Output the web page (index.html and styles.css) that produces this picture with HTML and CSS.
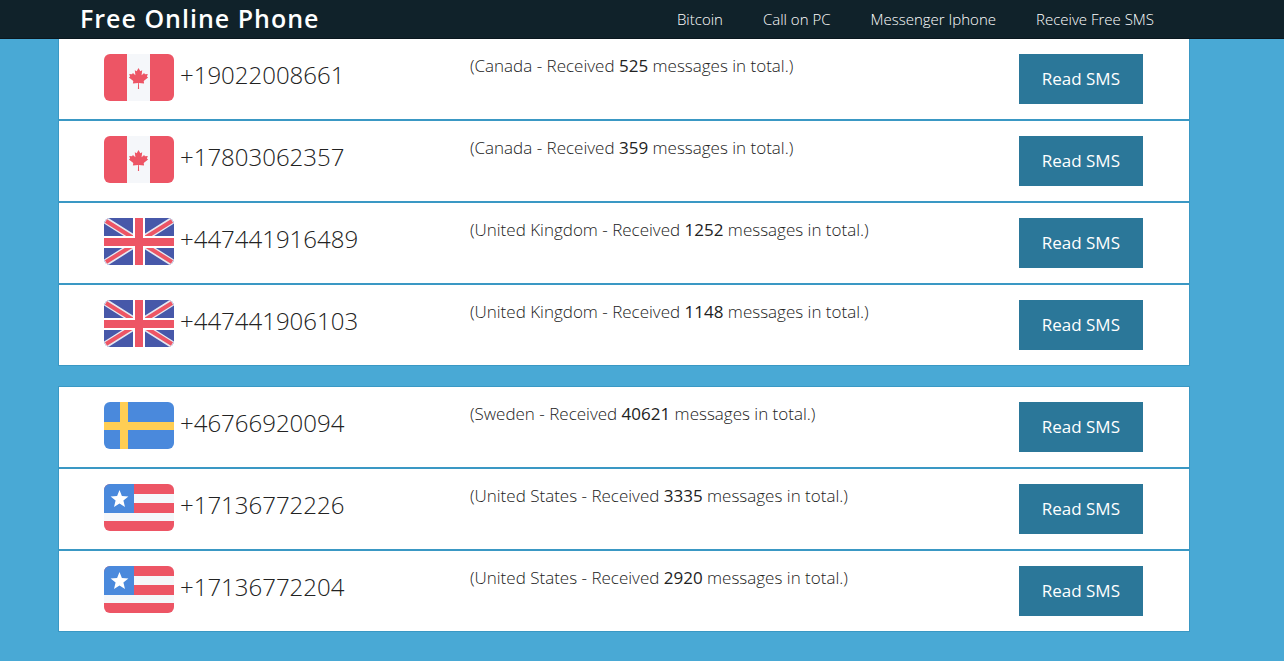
FILE: index.html
```html
<!DOCTYPE html>
<html lang="en">
<head>
  <meta charset="UTF-8" />
  <meta name="viewport" content="width=device-width, initial-scale=1.0"/>
  <title>Free Online Phone</title>
  <link rel="stylesheet" href="styles.css">
</head>
<body>

  <!-- flags, reused by the rows below -->
  <svg class="sprite" aria-hidden="true">
    <symbol id="canada" viewBox="0 0 70 47">
      <rect width="70" height="47" fill="#ed5565"/>
      <rect x="23" width="23" height="47" fill="#f5f7fa"/>
      <path fill="#ed5565" d="M34.5 14l1.8 3.2 1.9-.9-.6 5 2.5-2.4.8 1.4 2.9-.4-.9 2.7 1.2.9-4.4 3.6.4 2.4-5.2-.6.2 6h-1.2l.2-6-5.2.6.4-2.4-4.4-3.6 1.2-.9-.9-2.7 2.9.4.8-1.4 2.5 2.4-.6-5 1.9.9z"/>
    </symbol>
    <symbol id="uk" viewBox="0 0 70 47">
      <rect width="70" height="47" fill="#4758a9"/>
      <path stroke="#e6e9f2" stroke-width="7" d="M1 2l68 43M69 2L1 45"/>
      <path stroke="#ed5565" stroke-width="4" d="M2 3l66 41M68 3L2 44"/>
      <path fill="#fff" d="M29 0h12v18h29v12H41v17H29V30H0V18h29z"/>
      <path fill="#ed5565" d="M31 0h8v20h31v8H39v19h-8V28H0v-8h31z"/>
    </symbol>
    <symbol id="sweden" viewBox="0 0 70 47">
      <rect width="70" height="47" fill="#4a89dc"/>
      <path fill="#ffce54" d="M16 0h8v20h46v8H24v19h-8V28H0v-8h16z"/>
    </symbol>
    <symbol id="usa" viewBox="0 0 70 47">
      <rect width="70" height="47" fill="#f5f7fa"/>
      <path fill="#ed5565" d="M0 0h70v10H0zM0 19h70v10H0zM0 37h70v10H0z"/>
      <rect width="30" height="29" fill="#4a89dc"/>
      <path fill="#fff" d="M15.500 6l2.400 6 6.500.5-5 4.100 1.600 6.400-5.500-3.500-5.500 3.500 1.600-6.400-5-4.100 6.500-.5z"/>
    </symbol>
  </svg>

  <header class="header">
    <a class="logo" href="#">Free Online Phone</a>
    <nav class="menu">
      <a href="#">Bitcoin</a>
      <a href="#">Call on PC</a>
      <a href="#">Messenger Iphone</a>
      <a href="#">Receive Free SMS</a>
    </nav>
  </header>

  <main class="content">
    <section class="group">
      <div class="row">
        <div class="phone"><svg class="flag"><use href="#canada"/></svg><span>+19022008661</span></div>
        <p class="info">(Canada - Received <b>525</b> messages in total.)</p>
        <a class="btn" href="#">Read SMS</a>
      </div>
      <div class="row">
        <div class="phone"><svg class="flag"><use href="#canada"/></svg><span>+17803062357</span></div>
        <p class="info">(Canada - Received <b>359</b> messages in total.)</p>
        <a class="btn" href="#">Read SMS</a>
      </div>
      <div class="row">
        <div class="phone"><svg class="flag"><use href="#uk"/></svg><span>+447441916489</span></div>
        <p class="info">(United Kingdom - Received <b>1252</b> messages in total.)</p>
        <a class="btn" href="#">Read SMS</a>
      </div>
      <div class="row">
        <div class="phone"><svg class="flag"><use href="#uk"/></svg><span>+447441906103</span></div>
        <p class="info">(United Kingdom - Received <b>1148</b> messages in total.)</p>
        <a class="btn" href="#">Read SMS</a>
      </div>
    </section>

    <section class="group">
      <div class="row">
        <div class="phone"><svg class="flag"><use href="#sweden"/></svg><span>+46766920094</span></div>
        <p class="info">(Sweden - Received <b>40621</b> messages in total.)</p>
        <a class="btn" href="#">Read SMS</a>
      </div>
      <div class="row">
        <div class="phone"><svg class="flag"><use href="#usa"/></svg><span>+17136772226</span></div>
        <p class="info">(United States - Received <b>3335</b> messages in total.)</p>
        <a class="btn" href="#">Read SMS</a>
      </div>
      <div class="row">
        <div class="phone"><svg class="flag"><use href="#usa"/></svg><span>+17136772204</span></div>
        <p class="info">(United States - Received <b>2920</b> messages in total.)</p>
        <a class="btn" href="#">Read SMS</a>
      </div>
    </section>
  </main>

</body>
</html>
```
FILE: styles.css
```css
* {
  box-sizing: border-box;
}

body {
  margin: 0;
  background-color: #49a9d5;
  color: #222;
  font-family: "Open Sans", Arial, sans-serif;
  font-size: 17px;
  font-weight: 300;
  line-height: 24px;
}

a {
  text-decoration: none;
}

.sprite {
  display: none;
}

.header {
  display: flex;
  flex-wrap: wrap;
  justify-content: space-between;
  align-items: flex-start;
  padding: 0 130px 0 80px;
  background-color: #10222a;
  border-bottom: 1px solid #0a171e;
}

.logo {
  color: #fff;
  font-size: 25px;
  font-weight: 600;
  line-height: 36px;
  letter-spacing: 1px;
}

.menu {
  display: flex;
  flex-wrap: wrap;
  gap: 0 40px;
}

.menu a {
  color: #fff;
  font-size: 15px;
  line-height: 38px;
}

.content {
  padding: 0 94px 28px 58px;
}

.group {
  margin-bottom: 20px;
}

.group:last-child {
  margin-bottom: 0;
}

.row {
  display: grid;
  grid-template-columns: 4fr 6fr auto;
  align-items: start;
  padding: 15px 46px 15px 45px;
  background-color: #fff;
  border: 1px solid #3a98c4;
}

/* the first row continues straight from the header */
.group:first-child .row:first-child {
  border-top: none;
}

.phone {
  display: flex;
  gap: 6px;
  font-size: 24px;
  line-height: 42px;
}

.flag {
  width: 70px;
  height: 47px;
  border-radius: 6px;
  overflow: hidden;
}

.info {
  margin: 0;
}

.info b {
  font-weight: 400;
}

.btn {
  padding: 0 23px;
  background-color: #2b7799;
  color: #fff;
  font-weight: 400;
  line-height: 50px;
}
```
